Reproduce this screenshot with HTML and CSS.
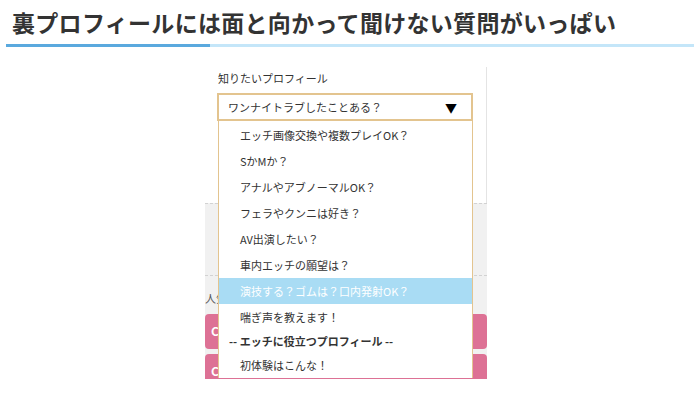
FILE: index.html
```html
<!DOCTYPE html>
<html lang="ja">
<head>
<meta charset="utf-8">
<link rel="stylesheet" href="styles.css">
</head>
<body>
<header class="heading">
  <h2 class="title">裏プロフィールには面と向かって聞けない質問がいっぱい</h2>
  <div class="rule"></div>
</header>
<div class="shot">
  <section class="upper">
    <div class="label">知りたいプロフィール</div>
    <div class="select">
      <span>ワンナイトラブしたことある？</span>
      <span class="arrow">▼</span>
    </div>
  </section>
  <section class="lower">
    <div class="band"></div>
    <div class="popular">人気</div>
    <div class="pink"><span>C</span></div>
    <div class="pink"><span>C</span></div>
  </section>
  <ul class="menu">
    <li class="item">エッチ画像交換や複数プレイOK？</li>
    <li class="item">SかMか？</li>
    <li class="item">アナルやアブノーマルOK？</li>
    <li class="item">フェラやクンニは好き？</li>
    <li class="item">AV出演したい？</li>
    <li class="item">車内エッチの願望は？</li>
    <li class="item active">演技する？ゴムは？口内発射OK？</li>
    <li class="item">喘ぎ声を教えます！</li>
    <li class="group">-- エッチに役立つプロフィール --</li>
    <li class="item">初体験はこんな！</li>
  </ul>
</div>
</body>
</html>
```
FILE: styles.css
```css
* { box-sizing: border-box; }
html, body { margin: 0; padding: 0; background: #fff; }
body {
  width: 700px;
  height: 404px;
  overflow: hidden;
  font-family: "Noto Sans CJK JP", "Noto Sans", sans-serif;
  color: #333;
}
.heading { padding: 0 6px; }
.title {
  margin: 0;
  padding: 6px 0 0 6px;
  font-size: 23px;
  line-height: 32px;
  font-weight: 700;
  color: #333;
  letter-spacing: 0.3px;
}
.rule {
  margin-top: 6px;
  height: 3px;
  background: linear-gradient(to right, #5aa9de 0, #5aa9de 204px, #c4e6f9 204px, #c4e6f9 100%);
}
.shot {
  position: relative;
  margin: 20px 0 0 205px;
  width: 282px;
  height: 312px;
  overflow: hidden;
}
.upper {
  height: 136px;
  background: #fff;
  border-right: 1px solid #e4e4e4;
  padding: 3px 0 0 12px;
}
.label {
  margin-left: 1px;
  font-size: 11px;
  line-height: 16px;
  color: #333;
}
.select {
  margin-top: 7px;
  width: 256px;
  height: 28px;
  border: 2px solid #e3c48f;
  display: flex;
  align-items: center;
  justify-content: space-between;
  padding: 0 14px 0 9px;
  font-size: 11px;
  color: #333;
}
.arrow { font-size: 12px; color: #000; }
.lower {
  background: #f1f1f1;
  border-top: 1px dashed #d2d2d2;
  height: 176px;
}
.band {
  height: 72px;
  border-bottom: 1px dashed #d2d2d2;
}
.popular {
  font-size: 11px;
  line-height: 14px;
  padding: 15px 0 0 0;
  color: #555;
}
.pink {
  margin-top: 9px;
  height: 35px;
  background: #dd7195;
  border-radius: 4px;
  padding: 9px 0 0 6px;
  color: #fff;
  font-weight: 700;
  font-size: 12px;
  line-height: 16px;
}
.pink + .pink { margin-top: 5px; }
.menu {
  position: absolute;
  top: 54px;
  left: 13px;
  width: 255px;
  margin: 0;
  padding: 1px 0 0 0;
  list-style: none;
  background: #fff;
  border-left: 1px solid #e3c48f;
  border-right: 1px solid #e3c48f;
}
.item {
  height: 26px;
  line-height: 26px;
  padding-left: 21px;
  font-size: 11px;
  color: #333;
}
.item.active { background: #a9dcf4; color: #fff; }
.group {
  height: 22px;
  line-height: 22px;
  padding-left: 10px;
  font-size: 11px;
  font-weight: 700;
  color: #333;
}
```
